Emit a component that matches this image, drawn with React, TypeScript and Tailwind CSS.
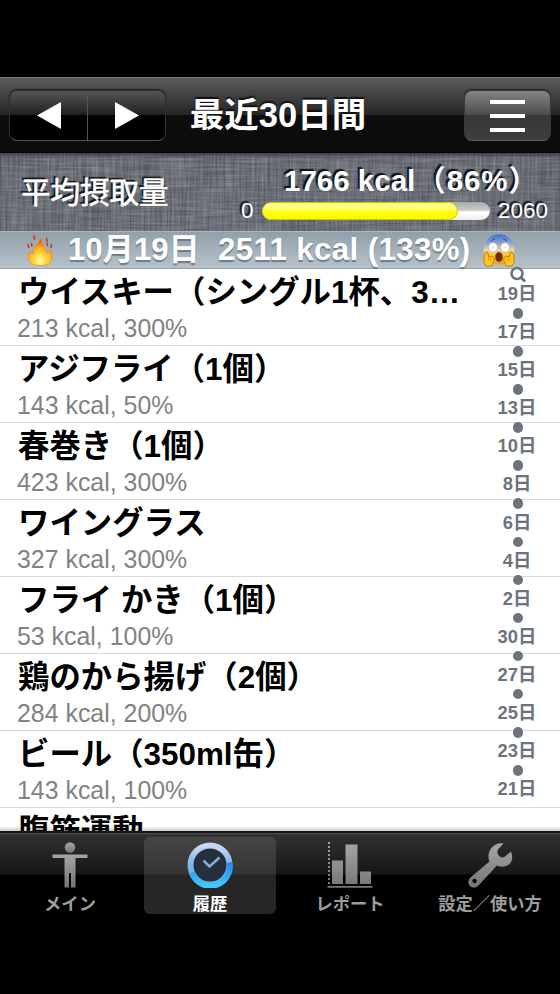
import { clsx } from "clsx";

const foods = [
  { name: "ウイスキー（シングル1杯、3…", detail: "213 kcal, 300%" },
  { name: "アジフライ（1個）", detail: "143 kcal, 50%" },
  { name: "春巻き（1個）", detail: "423 kcal, 300%" },
  { name: "ワイングラス", detail: "327 kcal, 300%" },
  { name: "フライ かき（1個）", detail: "53 kcal, 100%" },
  { name: "鶏のから揚げ（2個）", detail: "284 kcal, 200%" },
  { name: "ビール（350ml缶）", detail: "143 kcal, 100%" },
  { name: "腹筋運動", detail: "" },
];

const days = [19, 17, 15, 13, 10, 8, 6, 4, 2, 30, 27, 25, 23, 21];

const FlameIcon = () => (
  <svg width="28" height="32" viewBox="0 0 28 32">
    <defs>
      <radialGradient id="flame" cx="0.5" cy="0.84" r="0.8">
        <stop offset="0" stopColor="#fffbd0" />
        <stop offset="0.25" stopColor="#ffe04a" />
        <stop offset="0.6" stopColor="#fdb51b" />
        <stop offset="1" stopColor="#dd3b12" />
      </radialGradient>
    </defs>
    <path
      d="M6 30C2 28 1.500 22 3.500 17c1 2 2.500 3 4 3 0-4 1-6 3-9 2-2 3-4 3.500-7 2 3 2 6 4.500 9 1 2 1.500 4 2 6 1.500 0 3-1 4-3 2 6 2 12-1.500 14-4 2-13 2-17 0z"
      fill="url(#flame)"
      stroke="#ee8f20"
      strokeWidth="0.8"
    />
    <path
      d="M8 2l.6 3.500M2 10.500l.6 3M5.500 9.500l.4 2.500M20.500 4.500l.5 3M25.500 10.500l-.6 3M21.500 11.500l-.3-2"
      stroke="#c8321b"
      strokeWidth="1.5"
      strokeLinecap="round"
    />
  </svg>
);

const ScreamIcon = () => (
  <svg width="34" height="34" viewBox="0 0 34 34">
    <defs>
      <linearGradient id="face" x1="0" y1="0" x2="0" y2="1">
        <stop offset="0" stopColor="#3c70c8" />
        <stop offset="0.3" stopColor="#8ba6d8" />
        <stop offset="0.52" stopColor="#f3d79b" />
        <stop offset="0.7" stopColor="#fbc72c" />
        <stop offset="1" stopColor="#eaa01b" />
      </linearGradient>
    </defs>
    <circle cx="17" cy="16.5" r="15.3" fill="url(#face)" />
    <path d="M9 8q2-2 4-2M21 6q2 0 4 2" stroke="#31528e" strokeWidth="1" fill="none" />
    <ellipse cx="11" cy="14.500" rx="4.5" ry="4.800" fill="#fff" stroke="#b4a98e" strokeWidth="0.7" />
    <ellipse cx="23" cy="14.500" rx="4.5" ry="4.800" fill="#fff" stroke="#b4a98e" strokeWidth="0.7" />
    <circle cx="11" cy="14.500" r="1" fill="#ddd" />
    <circle cx="23" cy="14.500" r="1" fill="#ddd" />
    <ellipse cx="17" cy="24" rx="3.6" ry="4.800" fill="#6b2b0c" stroke="#a35412" strokeWidth="0.8" />
    <path
      d="M4 19q2-1 2 2l1 3q4-2 5 1 1 3-1 5l-1 3H4q-3-3-2-8 0-4 2-6zM30 19q-2-1-2 2l-1 3q-4-2-5 1-1 3 1 5l1 3h6q3-3 2-8 0-4-2-6z"
      fill="#ffc61d"
      stroke="#c77a10"
      strokeWidth="1"
    />
    <path d="M7 24l-1 3M9 25l-1 3M27 24l1 3M25 25l1 3" stroke="#dd930f" strokeWidth="0.8" />
  </svg>
);

// woven cloth behind the average panel
const Fabric = () => (
  <svg className="absolute inset-0 h-full w-full" aria-hidden="true">
    <filter id="weaveH" x="0" y="0" width="100%" height="100%" colorInterpolationFilters="sRGB">
      <feTurbulence type="fractalNoise" baseFrequency="0.025 0.5" numOctaves="2" seed="4" />
      <feColorMatrix values="1 0 0 0 -0.06  1 0 0 0 -0.05  1 0 0 0 -0.02  0 0 0 0 1" />
    </filter>
    <filter id="weaveV" x="0" y="0" width="100%" height="100%" colorInterpolationFilters="sRGB">
      <feTurbulence type="fractalNoise" baseFrequency="0.5 0.025" numOctaves="2" seed="9" />
      <feColorMatrix values="1 0 0 0 -0.06  1 0 0 0 -0.05  1 0 0 0 -0.02  0 0 0 0 1" />
    </filter>
    <rect width="100%" height="100%" fill="#6b6d76" />
    <rect width="100%" height="100%" filter="url(#weaveH)" opacity="0.26" />
    <rect width="100%" height="100%" filter="url(#weaveV)" opacity="0.22" />
  </svg>
);

const MainIcon = () => (
  <svg width="36" height="46" viewBox="0 0 36 46" fill="url(#tabGray)">
    <circle cx="18" cy="5.5" r="5.2" />
    <path d="M.5 12.5h35V16h-12v29.5H19V31h-2v14.5h-4.5V16H.5z" />
  </svg>
);

const ClockIcon = () => (
  <svg width="46" height="46" viewBox="0 0 46 46">
    <defs>
      <linearGradient id="ring" x1="0" y1="0" x2="0" y2="1">
        <stop offset="0" stopColor="#c9d9f3" />
        <stop offset="0.5" stopColor="#80b2ee" />
        <stop offset="1" stopColor="#55b5f4" />
      </linearGradient>
      <linearGradient id="ringLow" x1="0" y1="0" x2="0" y2="1">
        <stop offset="0" stopColor="#2384ed" />
        <stop offset="1" stopColor="#43c8fa" />
      </linearGradient>
    </defs>
    <circle cx="23" cy="23" r="16.5" fill="#252f3d" />
    <circle cx="23" cy="23" r="19.5" fill="none" stroke="url(#ring)" strokeWidth="6" />
    <path d="M42.4 20.5A19.5 19.5 0 0 1 4.8 30.5" fill="none" stroke="url(#ringLow)" strokeWidth="6" />
    <path d="M16.5 18.5l6 6L32.5 15.5" fill="none" stroke="#82abe0" strokeWidth="2.6" />
  </svg>
);

const ReportIcon = () => (
  <svg width="46" height="46" viewBox="0 0 46 46" fill="url(#tabGray)">
    <path d="M1 0h2v2H1zM1 4h2v2H1zM1 8h2v2H1zM1 12h2v2H1zM1 16h2v2H1zM1 20h2v2H1zM1 24h2v2H1zM1 28h2v2H1zM1 32h2v2H1zM1 36h2v2H1zM1 40h2v2H1z" />
    <path d="M5 18.5h11V42H5zM18.5 2.5h12V42h-12zM33 29.5h11V42H33zM.5 44h45v1.8H.5z" />
  </svg>
);

const WrenchIcon = () => (
  <svg width="46" height="46" viewBox="0 0 46 46" fill="url(#tabGray)">
    <path
      fillRule="evenodd"
      d="M36.500 1.500L31 7.500q-1.500 4 1 6.500 3 2.500 6 .5l6-5c2 5 1.500 9.500-1.500 12.500-3.500 3-8.500 3.500-12.500 1.500L12 43c-2.500 3-6.500 3.500-9 1-2.500-2.500-2-6.500 1-9l18.500-15.500c-2-4.500-1-9.500 1.500-13 3-4 7.500-6 12.500-5zM7.500 36.800a2.200 2.200 0 1 0 .1 4.400 2.200 2.200 0 0 0-.1-4.400z"
    />
  </svg>
);

const tabs = [
  { label: "メイン", icon: <MainIcon />, active: false },
  { label: "履歴", icon: <ClockIcon />, active: true },
  { label: "レポート", icon: <ReportIcon />, active: false },
  { label: "設定／使い方", icon: <WrenchIcon />, active: false },
];

const Header = () => (
  <header className="flex h-[76px] shrink-0 items-center justify-between border-t border-[#777] bg-[linear-gradient(#5b5b5b_0,#252525_49%,#0d0d0d_50%,#0c0c0c_97%,#000)] px-[9px]">
    <div className="flex h-[51px] w-[157px] overflow-hidden rounded-[8px] border border-[#303030] border-b-[#555] bg-[linear-gradient(#555_0,#202020_49%,#000_50%)] shadow-[0_-1px_1px_#222]">
      <button className="flex flex-1 items-center justify-center border-r border-[#555]">
        <svg width="24" height="27" viewBox="0 0 24 27" fill="#fff">
          <path d="M24 0v27L0 13.500z" />
        </svg>
      </button>
      <button className="flex flex-1 items-center justify-center">
        <svg width="24" height="27" viewBox="0 0 24 27" fill="#fff">
          <path d="M0 0v27l24-13.500z" />
        </svg>
      </button>
    </div>
    <h1 className="-ml-[3px] pb-[2px] text-[34.500px] leading-[50px] font-bold whitespace-nowrap text-white [text-shadow:0_-2px_1px_#111]">
      最近30日間
    </h1>
    <button className="ml-[71px] flex h-[51px] w-[87px] flex-col items-center justify-center gap-[10px] rounded-[8px] border border-[#3a3a3a] border-b-[#5c5c5c] bg-[linear-gradient(#858585_0,#4b4b4b_49%,#383838_50%,#3d3d3d)] shadow-[0_-1px_1px_#222]">
      <span className="h-1 w-[35px] bg-white" />
      <span className="h-1 w-[35px] bg-white" />
      <span className="h-1 w-[35px] bg-white" />
    </button>
  </header>
);

const Average = () => (
  <section className="relative h-[78px] shrink-0 overflow-hidden text-white [text-shadow:-2px_-2px_1px_#111]">
    <Fabric />
    <div className="relative flex h-full shadow-[inset_0_3px_3px_#333a]">
      <div className="w-[240px] shrink-0 pt-[19px] pl-[21px] text-[29.500px] leading-[42px] whitespace-nowrap [-webkit-text-stroke:0.6px_white]">
        平均摂取量
      </div>
      <div className="flex-1 pt-[8px]">
        <div className="flex pl-[44px] text-[29.500px] leading-[40px] font-bold whitespace-nowrap">
          <span>1766 kcal</span>
          <span className="ml-px tracking-[0.9px]">（86%）</span>
        </div>
        <div className="flex h-[20px] items-center">
          <span className="w-[22px] pl-px text-[22.500px] leading-[20px]">0</span>
          <div className="h-[18px] w-[228px] overflow-hidden rounded-full bg-[linear-gradient(#aaa_0,#c9c9c9_45%,#fff_55%,#ededed)]">
            <div className="h-full w-[86%] rounded-full border border-[#c9cc00] bg-[linear-gradient(#ffff7d_0,#ffff7d_35%,#ff0_55%,#f9f900)]" />
          </div>
          <span className="pl-[8px] text-[22.500px] leading-[20px]">2060</span>
        </div>
      </div>
    </div>
  </section>
);

const DayHeading = () => (
  <div className="flex h-[38px] shrink-0 items-center border-t border-b border-t-[#acb8bf] border-b-[#98a2aa] bg-[linear-gradient(#91a0aa,#b7c2cb)] pl-[26px]">
    <FlameIcon />
    <div className="ml-[14px] flex w-[414px] text-[31.200px] leading-[36px] font-bold whitespace-pre text-white [text-shadow:0_2px_1px_#737b82]">
      <span className="w-[150px]">10月19日</span>
      <span className="tracking-[0.4px]">2511 kcal (133%)</span>
    </div>
    <ScreamIcon />
  </div>
);

const DayIndex = () => (
  <nav className="absolute -top-[3px] left-[497px] flex w-[40px] flex-col items-center text-[#6b737f]">
    <svg width="18" height="17" viewBox="0 0 18 17" className="h-[15px] w-[18px] shrink-0 overflow-visible" preserveAspectRatio="xMidYMin slice" fill="none" stroke="currentColor">
      <circle cx="9" cy="7.500" r="5.500" strokeWidth="2.600" />
      <path d="M13 11.500l4 4" strokeWidth="3" />
    </svg>
    {days.map((day, i) => (
      <div key={day} className="flex h-[38.100px] flex-col items-center">
        <span className="h-[27px] text-[18.400px] leading-[25px] font-bold whitespace-nowrap">{day}日</span>
        {i < days.length - 1 && <span className="ml-[2px] size-[10.500px] rounded-full bg-[#6b737f]" />}
      </div>
    ))}
  </nav>
);

const FoodList = () => (
  <main className="relative h-[562px] shrink-0">
    <div className="h-full overflow-hidden bg-white">
      {foods.map((food) => (
        <div key={food.name} className="h-[77px] border-b border-[#d9d9d9] pl-[17px]">
          <div className="h-[45px] pl-px text-[31.400px] leading-[47px] font-bold whitespace-nowrap text-black">
            {food.name}
          </div>
          <div className="text-[24.900px] leading-[28px] whitespace-nowrap text-[#828282]">{food.detail}</div>
        </div>
      ))}
    </div>
    <DayIndex />
    <div className="absolute inset-x-0 bottom-0 h-[5px] bg-linear-to-b from-transparent to-black/20" />
  </main>
);

const TabBar = () => (
  <footer className="flex h-[84px] shrink-0 border-t-2 border-[#161616] bg-[linear-gradient(#505050_0,#303030_2px,#171717_41px,#000_42px)]">
    {tabs.map((tab) => (
      <button
        key={tab.label}
        className={clsx(
          "mx-[4px] mt-[4px] flex h-[77px] w-[132px] flex-col items-center rounded-[6px] pt-[5px]",
          tab.active && "bg-[linear-gradient(#454545_0,#343434_37px,#252525_38px,#272727)]"
        )}
      >
        <span className="h-[46px] shrink-0">{tab.icon}</span>
        <span
          className={clsx(
            "mt-[4px] shrink-0 text-[17.300px] leading-[24px] font-bold whitespace-nowrap",
            tab.active ? "text-white" : "text-[#9c9c9c]"
          )}
        >
          {tab.label}
        </span>
      </button>
    ))}
  </footer>
);

const App = () => {
  return (
    <div className="flex h-[994px] w-[560px] flex-col overflow-hidden bg-black pt-[77px] font-['Liberation_Sans','Noto_Sans_CJK_JP',sans-serif]">
      <svg width="0" height="0" className="absolute">
        <linearGradient id="tabGray" x1="0" y1="0" x2="0" y2="1">
          <stop offset="0" stopColor="#a5a5a5" />
          <stop offset="1" stopColor="#757575" />
        </linearGradient>
      </svg>
      <Header />
      <Average />
      <DayHeading />
      <FoodList />
      <TabBar />
    </div>
  );
};

export default App;
